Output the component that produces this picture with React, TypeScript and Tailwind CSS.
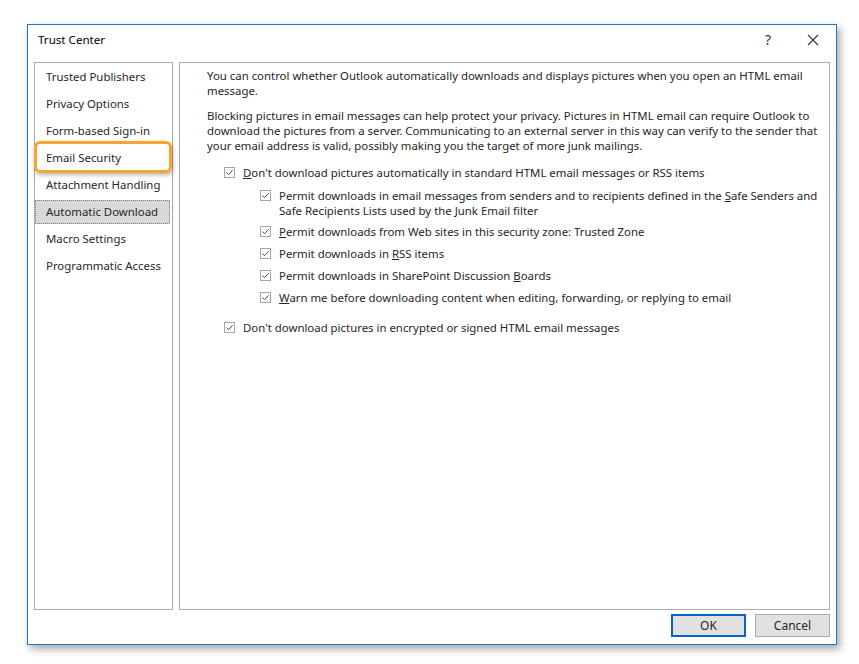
import React from "react";

const font = { fontFamily: '"Segoe UI", "Noto Sans", "Open Sans", sans-serif' };

function Check() {
  return (
    <span className="inline-flex items-center justify-center w-[11px] h-[11px] border border-[#a6a6a6] bg-white shrink-0">
      <svg width="9" height="9" viewBox="0 0 9 9">
        <path d="M1.5 4.6 L3.6 6.6 L7.6 2.4" fill="none" stroke="#333" strokeWidth="0.9" />
      </svg>
    </span>
  );
}

function Row({ children, sub }: { children: React.ReactNode; sub?: boolean }) {
  return (
    <div className={`flex items-start gap-[8px] ${sub ? "pl-[53px]" : "pl-[17px]"}`}>
      <div className="h-[15px] flex items-center">
        <Check />
      </div>
      <div className="leading-[15px]">{children}</div>
    </div>
  );
}

const navItems = [
  "Trusted Publishers",
  "Privacy Options",
  "Form-based Sign-in",
  "Email Security",
  "Attachment Handling",
  "Automatic Download",
  "Macro Settings",
  "Programmatic Access",
];

export default function App() {
  return (
    <div className="w-[859px] h-[664px] bg-white pt-[24px] pl-[27px] text-[11.4px] text-[#262626]" style={font}>
      <div className="w-[810px] h-[621px] border border-[#1979ca] bg-white flex flex-col shadow-[3px_4px_8px_rgba(0,0,0,0.35)]">
        {/* title bar */}
        <div className="h-[37px] flex items-start pt-[7px] pl-[10px] shrink-0">
          <span className="text-[11.6px] text-black leading-[15px]">Trust Center</span>
          <span className="ml-auto w-[20px] text-center text-[14px] leading-[15px] text-[#333]">?</span>
          <svg className="ml-[29px] mr-[17px] mt-[2px]" width="12" height="12" viewBox="0 0 12 12">
            <path d="M1 1 L11 11 M11 1 L1 11" stroke="#333" strokeWidth="1.1" />
          </svg>
        </div>

        {/* panels */}
        <div className="flex gap-[6px] px-[6px] h-[548px]">
          <div className="w-[139px] border border-[#ababab]">
            {navItems.map((item) => (
              <div key={item} className="relative h-[27px] flex items-center">
                {item === "Automatic Download" ? (
                  <div className="h-[24px] w-[135px] bg-[#d8d8d8] border border-dotted border-[#7a7a7a] flex items-center pl-[10px]">
                    {item}
                  </div>
                ) : (
                  <span className="pl-[11px]">{item}</span>
                )}
                {item === "Email Security" && (
                  <div className="absolute left-[-1px] top-[-3px] w-[138px] h-[32px] rounded-[6px] border-[3px] border-[#f7a52b] shadow-[1px_2px_4px_rgba(0,0,0,0.3)]" />
                )}
              </div>
            ))}
          </div>

          <div className="w-[651px] border border-[#ababab] pl-[27px] pt-[5px] leading-[15px] whitespace-nowrap">
            <p>
              You can control whether Outlook automatically downloads and displays pictures when you open an HTML email
              <br />
              message.
            </p>
            <p className="mt-[10px]">
              Blocking pictures in email messages can help protect your privacy. Pictures in HTML email can require Outlook to
              <br />
              download the pictures from a server. Communicating to an external server in this way can verify to the sender that
              <br />
              your email address is valid, possibly making you the target of more junk mailings.
            </p>
            <div className="mt-[12px] flex flex-col">
              <Row>
                <u>D</u>on't download pictures automatically in standard HTML email messages or RSS items
              </Row>
              <div className="mt-[8px]">
                <Row sub>
                  Permit downloads in email messages from senders and to recipients defined in the <u>S</u>afe Senders and
                  <br />
                  Safe Recipients Lists used by the Junk Email filter
                </Row>
              </div>
              <div className="mt-[6px]">
                <Row sub>
                  <u>P</u>ermit downloads from Web sites in this security zone: Trusted Zone
                </Row>
              </div>
              <div className="mt-[7px]">
                <Row sub>
                  Permit downloads in <u>R</u>SS items
                </Row>
              </div>
              <div className="mt-[7px]">
                <Row sub>
                  Permit downloads in SharePoint Discussion <u>B</u>oards
                </Row>
              </div>
              <div className="mt-[7px]">
                <Row sub>
                  <u>W</u>arn me before downloading content when editing, forwarding, or replying to email
                </Row>
              </div>
              <div className="mt-[15px]">
                <Row>Don't download pictures in encrypted or signed HTML email messages</Row>
              </div>
            </div>
          </div>
        </div>

        {/* buttons */}
        <div className="flex justify-end gap-[9px] pr-[6px] mt-[4px]">
          <button className="w-[75px] h-[23px] bg-[#e1e1e1] border-2 border-[#0a64c8] text-[12px] text-[#262626]">OK</button>
          <button className="w-[75px] h-[23px] bg-[#e1e1e1] border border-[#adadad] text-[12px] text-[#262626]">Cancel</button>
        </div>
      </div>
    </div>
  );
}
